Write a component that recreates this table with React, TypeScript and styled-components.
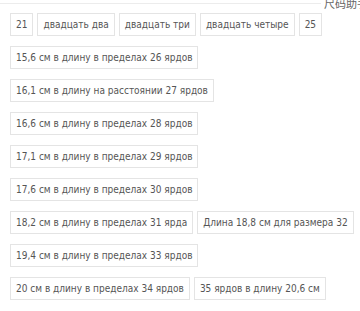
import React from 'react';
import styled, { createGlobalStyle } from 'styled-components';

const sizes = [
  '21',
  'двадцать два',
  'двадцать три',
  'двадцать четыре',
  '25',
  '15,6 см в длину в пределах 26 ярдов',
  '16,1 см в длину на расстоянии 27 ярдов',
  '16,6 см в длину в пределах 28 ярдов',
  '17,1 см в длину в пределах 29 ярдов',
  '17,6 см в длину в пределах 30 ярдов',
  '18,2 см в длину в пределах 31 ярда',
  'Длина 18,8 см для размера 32',
  '19,4 см в длину в пределах 33 ярдов',
  '20 см в длину в пределах 34 ярдов',
  '35 ярдов в длину 20,6 см',
];

const App = () => {
  return (
    <Page>
      <GlobalStyle />
      <Header>
        <Rule />
        <HelperLabel>尺码助手</HelperLabel>
      </Header>
      <SizeList>
        {sizes.map((s) => (
          <SizeOption key={s}>{s}</SizeOption>
        ))}
      </SizeList>
    </Page>
  );
};

export default App;

const GlobalStyle = createGlobalStyle`
  html, body {
    margin: 0;
    padding: 0;
    background: #fff;
    overflow: hidden;
  }
`;

const Page = styled.div`
  width: 360px;
  height: 311px;
  overflow: hidden;
  font-family: "DejaVu Sans Condensed", "Liberation Sans", "Noto Sans CJK SC", sans-serif;
`;

const Header = styled.div`
  display: flex;
  align-items: flex-start;
  height: 8px;
  margin-right: -8px;
`;

const Rule = styled.div`
  flex: 1;
  margin-top: 3px;
  border-top: 1px solid #ececec;
`;

const HelperLabel = styled.span`
  flex: 0 0 auto;
  margin-left: 3px;
  margin-top: -3px;
  font-size: 11px;
  line-height: 13px;
  color: #666;
  font-family: "Noto Sans CJK SC", sans-serif;
`;

const SizeList = styled.div`
  display: flex;
  flex-wrap: wrap;
  column-gap: 4px;
  row-gap: 10px;
  padding: 5px 0 0 10px;
`;

const SizeOption = styled.div`
  box-sizing: border-box;
  height: 23px;
  padding: 0 5px;
  border: 1px solid #e4e4e4;
  font-size: 10px;
  line-height: 21px;
  color: #555;
  white-space: nowrap;
  cursor: pointer;
`;
